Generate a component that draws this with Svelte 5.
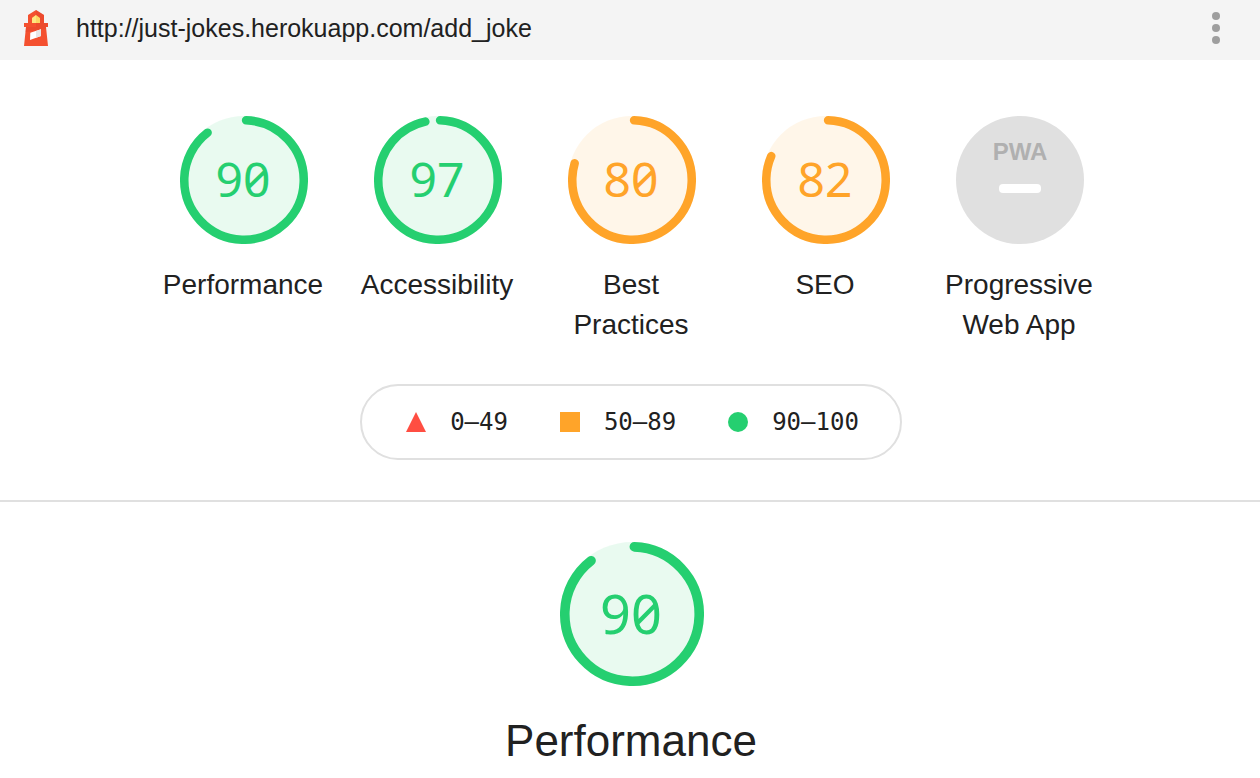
<script>
  const CIRCUMFERENCE = 2 * Math.PI * 56;

  const scores = [
    { label: 'Performance', score: 90 },
    { label: 'Accessibility', score: 97 },
    { label: 'Best Practices', score: 80 },
    { label: 'SEO', score: 82 }
  ];

  const rating = (score) => (score >= 90 ? 'pass' : score >= 50 ? 'average' : 'fail');
  const dash = (score) => `${(score / 100) * CIRCUMFERENCE - 4} ${CIRCUMFERENCE}`;
</script>

{#snippet gauge(score)}
  <span class="gauge {rating(score)}">
    <svg viewBox="0 0 120 120" aria-hidden="true">
      <circle class="base" cx="60" cy="60" r="60" />
      <circle
        class="arc"
        cx="60"
        cy="60"
        r="56"
        transform="rotate(-88 60 60)"
        stroke-dasharray={dash(score)}
      />
    </svg>
    <span class="value">{score}</span>
  </span>
{/snippet}

<header class="topbar">
  <svg class="logo" viewBox="0 0 24 36" aria-hidden="true">
    <path fill="#f4502f" d="M4 5 12 0l8 5v8h4v4h-2l2 19H0l2-19H0v-4h4z" />
    <path fill="#e2402a" d="M12 0l8 5v8h4v4H12z" opacity=".4" />
    <path fill="#e2402a" d="M2 17h20v2L1.500 22z" opacity=".4" />
    <path fill="#fdd663" d="M8 13V8l4-3 4 3v5z" />
    <path fill="#fff59d" d="M8 13V8l4-3v8z" opacity=".5" />
    <path fill="#fff" d="M6.300 22.700 17 19.300V26L6 30z" />
    <path fill="#e6e6e6" d="M12 20.900 17 19.300V26l-5 1.800z" />
  </svg>
  <a class="url" href="http://just-jokes.herokuapp.com/add_joke">http://just-jokes.herokuapp.com/add_joke</a>
  <button class="menu" type="button" aria-label="Tools menu">
    <svg viewBox="0 0 8 32" aria-hidden="true">
      <circle cx="4" cy="4" r="4" /><circle cx="4" cy="16" r="4" /><circle cx="4" cy="28" r="4" />
    </svg>
  </button>
</header>

<main>
  <section class="scores">
    <nav class="gauges">
      {#each scores as item}
        <a class="cell" href="#{item.label.toLowerCase().replace(' ', '-')}">
          {@render gauge(item.score)}
          <span class="label">{item.label}</span>
        </a>
      {/each}
      <a class="cell" href="#pwa">
        <span class="gauge">
          <svg viewBox="0 0 128 128" aria-hidden="true">
            <circle cx="64" cy="64" r="64" fill="#e0e0e0" />
            <text class="pwa" x="64" y="44" text-anchor="middle">PWA</text>
            <rect x="43" y="68" width="42" height="9" rx="4" fill="#fff" />
          </svg>
        </span>
        <span class="label">Progressive Web App</span>
      </a>
    </nav>

    <div class="legend">
      <span class="range">
        <svg viewBox="0 0 20 20" aria-hidden="true"><path d="M10 0l10 20H0z" fill="#ff4e42" /></svg>0–49
      </span>
      <span class="range">
        <svg viewBox="0 0 20 20" aria-hidden="true"><path d="M0 0h20v20H0z" fill="#ffa429" /></svg>50–89
      </span>
      <span class="range">
        <svg viewBox="0 0 20 20" aria-hidden="true"><circle cx="10" cy="10" r="10" fill="#25cf70" /></svg>90–100
      </span>
    </div>
  </section>

  <section class="category" id="performance">
    {@render gauge(90)}
    <h1>Performance</h1>
  </section>
</main>

<style>
  :global(body) {
    margin: 0;
    background: #fff;
    color: #212121;
    font-family: 'Liberation Sans', Arial, sans-serif;
    overflow-x: hidden;
  }

  a {
    color: inherit;
    text-decoration: none;
  }

  svg {
    display: block;
  }

  .topbar {
    display: flex;
    align-items: center;
    height: 60px;
    box-sizing: border-box;
    padding: 0 24px 4px;
    background: #f4f4f4;
  }

  .logo {
    width: 24px;
    height: 36px;
  }

  .url {
    flex: 1;
    margin-left: 28px;
    font-size: 25px;
    line-height: 36px;
  }

  .menu {
    padding: 0 16px;
    border: 0;
    background: none;
  }

  .menu svg {
    width: 8px;
    height: 32px;
    fill: #9e9e9e;
  }

  .scores {
    display: flex;
    flex-direction: column;
    align-items: center;
    padding: 56px 0 40px 2px;
    border-bottom: 2px solid #e0e0e0;
  }

  .gauges {
    display: flex;
    justify-content: center;
    gap: 32px;
  }

  .cell {
    display: flex;
    flex-direction: column;
    align-items: center;
    width: 162px;
  }

  .gauge {
    --size: 128px;
    display: grid;
    place-items: center;
    width: var(--size);
    height: var(--size);
    padding-left: 2px;
    font-family: 'Noto Sans', 'DejaVu Sans Mono', sans-serif;
    font-size: 48px;
    font-feature-settings: 'zero';
  }

  .gauge > * {
    grid-area: 1 / 1;
  }

  .gauge svg {
    width: var(--size);
    height: var(--size);
  }

  .pass {
    color: #25cf70;
  }

  .average {
    color: #ffa429;
  }

  .base {
    fill: currentColor;
    opacity: 0.1;
  }

  .arc {
    fill: none;
    stroke: currentColor;
    stroke-width: 8;
    stroke-linecap: round;
  }

  .value {
    padding: 0 2px 2px 0;
    line-height: 1;
  }

  .pwa {
    fill: #b0b0b0;
    font-family: 'Liberation Sans', Arial, sans-serif;
    font-size: 24px;
    font-weight: 700;
  }

  .label {
    margin-top: 21px;
    font-size: 28px;
    line-height: 40px;
    text-align: center;
  }

  .legend {
    display: flex;
    gap: 52px;
    margin-top: 39px;
    padding: 0 41px 0 44px;
    border: 2px solid #e0e0e0;
    border-radius: 38px;
    font-family: 'DejaVu Sans Mono', Menlo, monospace;
    font-size: 24px;
    line-height: 72px;
  }

  .range {
    display: flex;
    align-items: center;
    gap: 24px;
  }

  .range svg {
    width: 20px;
    height: 20px;
  }

  .category {
    display: flex;
    flex-direction: column;
    align-items: center;
    padding: 40px 0 0 2px;
  }

  .category .gauge {
    --size: 144px;
    font-size: 54px;
  }

  h1 {
    margin: 30px 0 0;
    font-size: 44px;
    font-weight: 400;
    line-height: 50px;
  }
</style>
